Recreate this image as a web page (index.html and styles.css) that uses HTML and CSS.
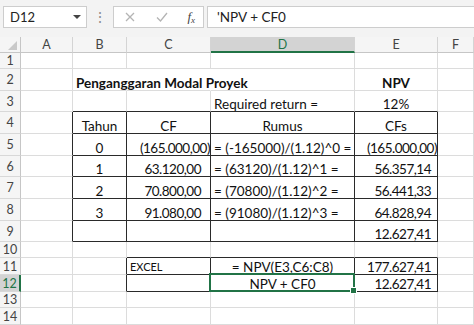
FILE: index.html
```html
<!DOCTYPE html>
<html lang="id">
<head>
<meta charset="utf-8">
<title>Penganggaran Modal Proyek</title>
<link rel="stylesheet" href="styles.css">
</head>
<body>
<div class="app">
  <div class="toolbar">
    <div class="namebox"><span>D12</span><span class="caret"></span></div>
    <div class="dots">⋮</div>
    <div class="fxbox">
      <svg class="ico" width="14" height="14" viewBox="0 0 14 14"><path d="M3 3 L11 11 M11 3 L3 11" stroke="#b4b4b4" stroke-width="1.3" fill="none"/></svg>
      <svg class="ico" width="14" height="14" viewBox="0 0 14 14"><path d="M2 7.5 L5.5 11 L12 3" stroke="#b4b4b4" stroke-width="1.3" fill="none"/></svg>
      <span class="fx">f<sub>x</sub></span>
    </div>
    <div class="formula">'NPV + CF0</div>
  </div>

  <div class="sheet">
    <!-- column headers -->
    <div class="h corner"><span class="tri"></span></div>
    <div class="h">A</div>
    <div class="h">B</div>
    <div class="h">C</div>
    <div class="h hsel">D</div>
    <div class="h">E</div>
    <div class="h">F</div>

    <!-- row 1 -->
    <div class="rh">1</div>
    <div class="c"></div><div class="c"></div><div class="c"></div><div class="c"></div><div class="c"></div><div class="c"></div>

    <!-- row 2 -->
    <div class="rh">2</div>
    <div class="c"></div>
    <div class="c l b nr">Penganggaran Modal Proyek</div>
    <div class="c nr"></div>
    <div class="c"></div>
    <div class="c ctr b">NPV</div>
    <div class="c"></div>

    <!-- row 3 -->
    <div class="rh">3</div>
    <div class="c"></div>
    <div class="c db"></div>
    <div class="c db"></div>
    <div class="c l db">Required return =</div>
    <div class="c ctr db">12%</div>
    <div class="c"></div>

    <!-- row 4 -->
    <div class="rh">4</div>
    <div class="c dr"></div>
    <div class="c ctr dr db">Tahun</div>
    <div class="c ctr dr db">CF</div>
    <div class="c ctr dr db">Rumus</div>
    <div class="c ctr dr db">CFs</div>
    <div class="c"></div>

    <!-- row 5 -->
    <div class="rh">5</div>
    <div class="c dr"></div>
    <div class="c ctr dr db">0</div>
    <div class="c num rn dr db">(165.000,00)</div>
    <div class="c l dr db">= (-165000)/(1.12)^0 =</div>
    <div class="c num rn dr db">(165.000,00)</div>
    <div class="c"></div>

    <!-- row 6 -->
    <div class="rh">6</div>
    <div class="c dr"></div>
    <div class="c ctr dr db">1</div>
    <div class="c num rc dr db">63.120,00</div>
    <div class="c l dr db">= (63120)/(1.12)^1 =</div>
    <div class="c num re dr db">56.357,14</div>
    <div class="c"></div>

    <!-- row 7 -->
    <div class="rh">7</div>
    <div class="c dr"></div>
    <div class="c ctr dr db">2</div>
    <div class="c num rc dr db">70.800,00</div>
    <div class="c l dr db">= (70800)/(1.12)^2 =</div>
    <div class="c num re dr db">56.441,33</div>
    <div class="c"></div>

    <!-- row 8 -->
    <div class="rh">8</div>
    <div class="c dr"></div>
    <div class="c ctr dr db">3</div>
    <div class="c num rc dr db">91.080,00</div>
    <div class="c l dr db">= (91080)/(1.12)^3 =</div>
    <div class="c num re dr db">64.828,94</div>
    <div class="c"></div>

    <!-- row 9 -->
    <div class="rh">9</div>
    <div class="c dr"></div>
    <div class="c dr db"></div>
    <div class="c dr db"></div>
    <div class="c dr db"></div>
    <div class="c num re dr db">12.627,41</div>
    <div class="c"></div>

    <!-- row 10 -->
    <div class="rh">10</div>
    <div class="c"></div>
    <div class="c"></div>
    <div class="c db"></div>
    <div class="c db"></div>
    <div class="c db"></div>
    <div class="c"></div>

    <!-- row 11 -->
    <div class="rh">11</div>
    <div class="c"></div>
    <div class="c dr"></div>
    <div class="c l small dr db">EXCEL</div>
    <div class="c ctr dr db">= NPV(E3,C6:C8)</div>
    <div class="c num re dr db">177.627,41</div>
    <div class="c"></div>

    <!-- row 12 -->
    <div class="rh rsel">12</div>
    <div class="c"></div>
    <div class="c dr"></div>
    <div class="c dr db"></div>
    <div class="c ctr dr db active">NPV + CF0<span class="sel"></span></div>
    <div class="c num re dr db">12.627,41</div>
    <div class="c"></div>

    <!-- row 13 -->
    <div class="rh">13</div>
    <div class="c"></div><div class="c"></div><div class="c"></div><div class="c"></div><div class="c"></div><div class="c"></div>

    <!-- row 14 -->
    <div class="rh">14</div>
    <div class="c"></div><div class="c"></div><div class="c"></div><div class="c"></div><div class="c"></div><div class="c"></div>
  </div>
</div>
</body>
</html>
```

FILE: styles.css
```css
html, body {
  margin: 0;
  padding: 0;
  background: #ffffff;
}

.app {
  width: 474px;
  height: 325px;
  overflow: hidden;
  font-family: "Lato", "Liberation Sans", sans-serif;
  color: #111;
}

/* ---------- formula bar ---------- */
.toolbar {
  height: 37px;
  box-sizing: border-box;
  background: #f3f3f3;
  display: flex;
  align-items: flex-start;
  padding: 6px 0 0 3px;
}

.namebox {
  width: 84px;
  height: 22px;
  box-sizing: border-box;
  background: #fff;
  border: 1px solid #cdcdcd;
  display: flex;
  align-items: center;
  justify-content: space-between;
  padding: 0 5px 0 6px;
  font-size: 13px;
  color: #222;
}

.caret {
  width: 0;
  height: 0;
  border-left: 4px solid transparent;
  border-right: 4px solid transparent;
  border-top: 4px solid #444;
}

.dots {
  width: 26px;
  text-align: center;
  color: #8c8c8c;
  font-size: 14px;
  line-height: 22px;
}

.fxbox {
  width: 91px;
  height: 22px;
  box-sizing: border-box;
  background: #fff;
  border: 1px solid #cdcdcd;
  display: flex;
  align-items: center;
  justify-content: space-between;
  padding: 0 8px 0 9px;
}

.fx {
  font-family: "Liberation Serif", serif;
  font-style: italic;
  font-size: 13px;
  color: #444;
  line-height: 1;
}

.fx sub {
  font-size: 9px;
  vertical-align: -2px;
}

.formula {
  flex: 1;
  height: 22px;
  box-sizing: border-box;
  margin-left: 3px;
  background: #fff;
  border: 1px solid #cdcdcd;
  border-right: none;
  padding-left: 9px;
  font-size: 13.5px;
  line-height: 20px;
  color: #222;
}

/* ---------- sheet grid ---------- */
.sheet {
  display: grid;
  grid-template-columns: 21px 52px 54px 84px 144px 83px 1fr;
  grid-template-rows: 16px 16px 22px 21px 22px 22px 21px 22px 22px 21px 16px 17px 17px 16px 17px;
  font-size: 13.5px;
}

.h, .rh {
  box-sizing: border-box;
  background: #f5f5f5;
  color: #444;
  display: flex;
  align-items: center;
  justify-content: center;
  font-size: 12.5px;
  border-right: 1px solid #d4d4d4;
  border-bottom: 1px solid #c6c6c6;
}

.rh {
  border-bottom: 1px solid #d8d8d8;
  border-right: 1px solid #c6c6c6;
}

.corner {
  position: relative;
  border-right: 1px solid #c6c6c6;
}

.tri {
  position: absolute;
  right: 3px;
  bottom: 2px;
  width: 0;
  height: 0;
  border-left: 9px solid transparent;
  border-bottom: 9px solid #c9c9c9;
}

.hsel {
  background: #d3d3d3;
  color: #217346;
  border-bottom: 2px solid #217346;
}

.rsel {
  background: #d3d3d3;
  color: #217346;
  border-right: 2px solid #217346;
}

.c {
  box-sizing: border-box;
  border-right: 1px solid #dcdcdc;
  border-bottom: 1px solid #dcdcdc;
  display: flex;
  align-items: flex-end;
  padding-bottom: 0;
  white-space: nowrap;
  min-width: 0;
  line-height: 14px;
}

/* overflowing text hides the gridline it crosses */
.nr { border-right-color: transparent; }

.dr { border-right: 1px solid #2a2a2a; }
.db { border-bottom: 1px solid #2a2a2a; }

.b { font-weight: 700; }
.num { letter-spacing: -0.5px; }
.l { justify-content: flex-start; padding-left: 3px; }
.ctr { justify-content: center; }
.rn { justify-content: flex-end; padding-right: 0; }
.rc { justify-content: flex-end; padding-right: 9px; }
.re { justify-content: flex-end; padding-right: 6px; }

.small {
  font-size: 11px;
  line-height: 13px;
  padding-bottom: 1px;
}

/* active cell frame and fill handle */
.active { position: relative; }

.sel {
  position: absolute;
  left: -2px;
  top: -2px;
  right: -1px;
  bottom: -1px;
  border: 2px solid #217346;
  pointer-events: none;
}

.sel::after {
  content: "";
  position: absolute;
  right: -4px;
  bottom: -4px;
  width: 5px;
  height: 5px;
  background: #217346;
  border: 1px solid #fff;
}
```
